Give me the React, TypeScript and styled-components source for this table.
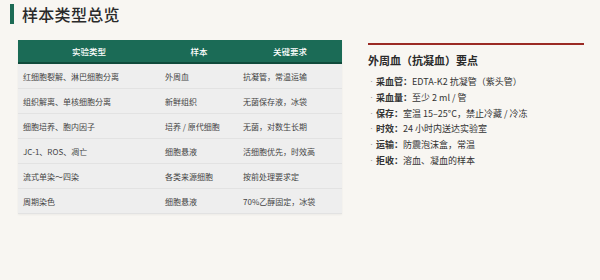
import React from 'react';
import styled, { createGlobalStyle } from 'styled-components';

const GlobalStyle = createGlobalStyle`
  html, body {
    margin: 0;
    padding: 0;
    background: #f8f6f2;
  }
  body {
    font-family: 'Noto Sans CJK SC', 'Noto Sans', sans-serif;
  }
`;

const rows = [
  ['红细胞裂解、淋巴细胞分离', '外周血', '抗凝管，常温运输'],
  ['组织解离、单核细胞分离', '新鲜组织', '无菌保存液，冰袋'],
  ['细胞培养、胞内因子', '培养 / 原代细胞', '无菌，对数生长期'],
  ['JC-1、ROS、凋亡', '细胞悬液', '活细胞优先，时效高'],
  ['流式单染～四染', '各类来源细胞', '按前处理要求定'],
  ['周期染色', '细胞悬液', '70%乙醇固定，冰袋'],
];

const points = [
  ['采血管', 'EDTA-K2 抗凝管（紫头管）'],
  ['采血量', '至少 2 ml / 管'],
  ['保存', '室温 15–25°C，禁止冷藏 / 冷冻'],
  ['时效', '24 小时内送达实验室'],
  ['运输', '防震泡沫盒，常温'],
  ['拒收', '溶血、凝血的样本'],
];

function App() {
  return (
    <Page>
      <GlobalStyle />
      <TitleRow>
        <TitleBar />
        <Title>样本类型总览</Title>
      </TitleRow>
      <Content>
        <Table>
          <thead>
            <tr>
              <Th $width={142}>实验类型</Th>
              <Th $width={78}>样本</Th>
              <Th $width={104}>关键要求</Th>
            </tr>
          </thead>
          <tbody>
            {rows.map((row, i) => (
              <Tr key={i}>
                {row.map((cell, j) => (
                  <Td key={j}>{cell}</Td>
                ))}
              </Tr>
            ))}
          </tbody>
        </Table>
        <Panel>
          <PanelTitle>外周血（抗凝血）要点</PanelTitle>
          <PointList>
            {points.map(([label, text]) => (
              <Point key={label}>
                <Dot>·</Dot>
                <span>
                  <Label>{label}：</Label>
                  {text}
                </span>
              </Point>
            ))}
          </PointList>
        </Panel>
      </Content>
    </Page>
  );
}
export default App;

const Page = styled.div`
  width: 600px;
  height: 280px;
  box-sizing: border-box;
  padding: 4px 16px 0 10px;
  overflow: hidden;
`;

const TitleRow = styled.div`
  display: flex;
  align-items: center;
  gap: 8px;
  height: 20px;
`;

const TitleBar = styled.div`
  width: 4px;
  height: 20px;
  background: #1d6b55;
`;

const Title = styled.div`
  font-size: 16px;
  font-weight: 500;
  color: #2a2a2a;
  line-height: 20px;
  letter-spacing: 0.3px;
`;

const Content = styled.div`
  display: flex;
  align-items: flex-start;
  gap: 26px;
  margin-top: 16px;
  padding-left: 8px;
`;

const Table = styled.table`
  width: 324px;
  border-collapse: collapse;
  table-layout: fixed;
  font-size: 8px;
  box-shadow: 0 1px 2px rgba(0, 0, 0, 0.05);
`;

const Th = styled.th<{ $width: number }>`
  width: ${props => props.$width}px;
  height: 22px;
  padding: 0;
  background: #1b6b56;
  border-bottom: 2px solid #0f4a3b;
  color: #ffffff;
  font-weight: 500;
  font-size: 8.5px;
  text-align: center;
`;

const Tr = styled.tr`
  background: #eeeeee;
  border-bottom: 1px solid #e2e2e2;
`;

const Td = styled.td`
  height: 24px;
  padding: 0 0 0 5px;
  color: #444444;
  font-size: 8px;
  white-space: nowrap;
  overflow: hidden;
`;

const Panel = styled.div`
  width: 216px;
  margin-top: 3px;
  border-top: 2px solid #9b2a24;
  padding-top: 8px;
`;

const PanelTitle = styled.div`
  font-size: 11px;
  font-weight: 600;
  color: #2a2a2a;
  line-height: 14px;
`;

const PointList = styled.div`
  margin-top: 7px;
  display: flex;
  flex-direction: column;
`;

const Point = styled.div`
  display: flex;
  align-items: center;
  gap: 3px;
  padding-left: 2px;
  font-size: 9px;
  line-height: 15.8px;
  color: #333333;
  white-space: nowrap;
`;

const Dot = styled.span`
  font-family: 'Liberation Sans', sans-serif;
  color: #999999;
`;

const Label = styled.span`
  font-weight: 600;
`;
